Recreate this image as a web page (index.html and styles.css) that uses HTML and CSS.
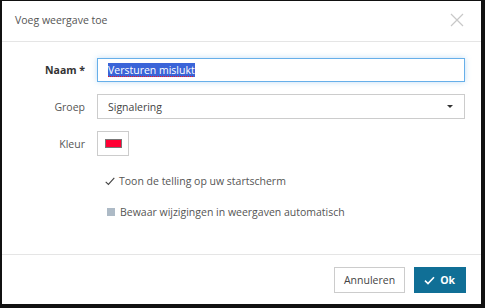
FILE: index.html
```html
<!DOCTYPE html>
<html lang="nl">
<head>
    <meta charset="UTF-8">
    <title>Voeg weergave toe</title>
    <link rel="stylesheet" href="styles.css">
</head>
<body>
    <div class="dialog">
        <div class="dialog-header">
            <span class="dialog-title">Voeg weergave toe</span>
            <span class="close">
                <svg width="14" height="14" viewBox="0 0 14 14"><path d="M1 1L13 13M13 1L1 13" stroke="#c8c8c8" stroke-width="1.2" fill="none"/></svg>
            </span>
        </div>

        <div class="dialog-body">
            <div class="form-row">
                <label class="label label-bold">Naam *</label>
                <div class="input input-focus"><span class="selected">Versturen mislukt</span></div>
            </div>
            <div class="form-row">
                <label class="label">Groep</label>
                <div class="input select">
                    <span>Signalering</span>
                    <span class="caret"></span>
                </div>
            </div>
            <div class="form-row">
                <label class="label">Kleur</label>
                <div class="color-btn"><span class="swatch"></span></div>
            </div>

            <div class="check-row first">
                <svg class="check" width="10" height="9" viewBox="0 0 10 9"><path d="M0.7 4.8L3.4 7.4L9.3 0.8" stroke="#444" stroke-width="1.1" fill="none"/></svg>
                <span>Toon de telling op uw startscherm</span>
            </div>
            <div class="check-row">
                <span class="box"></span>
                <span>Bewaar wijzigingen in weergaven automatisch</span>
            </div>
        </div>

        <div class="dialog-footer">
            <button class="btn btn-default">Annuleren</button>
            <button class="btn btn-primary">
                <svg width="11" height="9" viewBox="0 0 11 9"><path d="M1 4.6L4 7.5L10 1.2" stroke="#fff" stroke-width="1.6" fill="none"/></svg>
                Ok
            </button>
        </div>
    </div>
</body>
</html>
```

FILE: styles.css
```css
* {
    margin: 0;
    padding: 0;
    box-sizing: border-box;
}

body {
    background: #111;
    font-family: "Open Sans", sans-serif;
    font-size: 10.5px;
    color: #555;
    padding: 1px 4px 4px 2px;
    height: 308px;
}

.dialog {
    background: #fff;
    height: 303px;
    display: flex;
    flex-direction: column;
}

/* Header */
.dialog-header {
    height: 41px;
    border-bottom: 1px solid #e5e5e5;
    display: flex;
    align-items: center;
    justify-content: space-between;
    padding: 0 17px 2px 13px;
}

.dialog-title {
    color: #555;
}

.close {
    display: flex;
}

/* Body */
.dialog-body {
    flex: 1;
    padding-top: 16px;
}

.form-row {
    display: flex;
    align-items: center;
    margin-bottom: 12px;
}

.label {
    width: 83px;
    text-align: right;
    margin-right: 12px;
    color: #555;
}

.label-bold {
    font-weight: bold;
    color: #333;
}

.input {
    width: 368px;
    height: 25px;
    border: 1px solid #ccc;
    display: flex;
    align-items: center;
    padding-left: 10px;
    color: #444;
}

.input-focus {
    height: 24px;
    border-color: #66afe9;
    box-shadow: 0 0 6px rgba(102, 175, 233, 0.4);
}

.selected {
    background: #3a64d8;
    color: #fff;
    text-decoration: underline dotted #e8162a;
    text-underline-offset: 2px;
    line-height: 14px;
}

.select {
    justify-content: space-between;
    padding-right: 11px;
}

.caret {
    width: 0;
    height: 0;
    border-left: 3px solid transparent;
    border-right: 3px solid transparent;
    border-top: 3px solid #333;
}

.color-btn {
    width: 32px;
    height: 25px;
    border: 1px solid #ccc;
    display: flex;
    align-items: center;
    justify-content: center;
}

.swatch {
    width: 17px;
    height: 9px;
    background: #ff0033;
    border: 1px solid #777;
}

.check-row {
    display: flex;
    align-items: center;
    padding-left: 103px;
    color: #555;
}

.check-row.first {
    margin-top: 18px;
}

.check-row + .check-row {
    margin-top: 17px;
}

.check {
    margin-right: 4px;
}

.box {
    width: 8px;
    height: 8px;
    background: #adbac6;
    margin: 0 5px 0 2px;
}

/* Footer */
.dialog-footer {
    height: 50px;
    border-top: 1px solid #e5e5e5;
    display: flex;
    justify-content: flex-end;
    align-items: flex-start;
    gap: 9px;
    padding: 12px 15px 0 0;
}

.btn {
    height: 26px;
    font-family: "Open Sans", sans-serif;
    font-size: 10.5px;
    border: 1px solid #ccc;
    background: #fff;
    color: #444;
    padding: 0 9px;
    display: flex;
    align-items: center;
    gap: 5px;
}

.btn-primary {
    background: #106f96;
    border-color: #106f96;
    color: #fff;
    font-weight: bold;
    padding: 0 10px 0 9px;
}
```
